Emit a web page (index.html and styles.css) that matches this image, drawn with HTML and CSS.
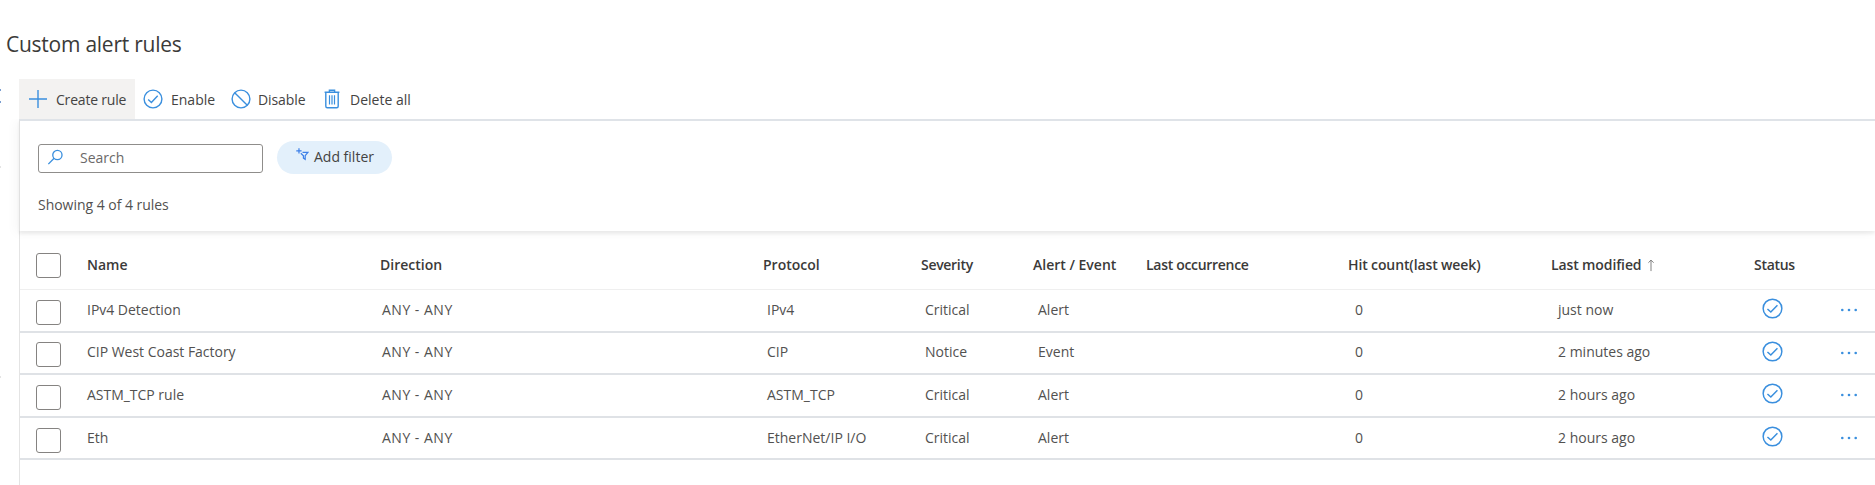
FILE: index.html
```html
<!DOCTYPE html>
<html lang="en">
<head>
<meta charset="utf-8">
<title>Custom alert rules</title>
<link rel="stylesheet" href="styles.css">
</head>
<body>
<svg width="0" height="0" class="defs">
  <symbol id="check" viewBox="0 0 20 20"><circle cx="10" cy="10" r="8.9"/><path d="M5.2 10.4 8.4 13.4 14.7 6.8"/></symbol>
  <symbol id="dots" viewBox="0 0 18 4"><circle cx="2.3" cy="2" r="1.3"/><circle cx="9" cy="2" r="1.3"/><circle cx="15.7" cy="2" r="1.3"/></symbol>
</svg>
<div class="page">
  <h1 class="title">Custom alert rules</h1>
  <div class="body">
    <aside class="edge"><i class="blue"></i><i class="blue second"></i><i class="grey"></i><i class="grey low"></i></aside>
    <main class="main">
      <nav class="toolbar">
        <a class="tool create"><svg class="ico" viewBox="0 0 20 20"><path d="M10 1V19M1 10H19"/></svg><span>Create rule</span></a>
        <a class="tool enable"><svg class="ico"><use href="#check"/></svg><span>Enable</span></a>
        <a class="tool disable"><svg class="ico" viewBox="0 0 20 20"><circle cx="10" cy="10" r="8.9"/><path d="M3.7 3.7 16.3 16.3"/></svg><span>Disable</span></a>
        <a class="tool delete"><svg class="ico" viewBox="0 0 20 20"><path d="M3.8 3.2V17.2Q3.8 18.7 5.3 18.7H14.7Q16.2 18.7 16.2 17.2V3.2M2.6 3.2H17.4M7.4 3V1.2H12.6V3"/><path class="thin" d="M7.5 6.2V15.6M10 6.2V15.6M12.5 6.2V15.6"/></svg><span>Delete all</span></a>
      </nav>
      <section class="filters">
        <div class="controls">
          <div class="search"><svg class="ico glass" viewBox="0 0 18 18"><circle cx="11" cy="6.3" r="4.9"/><path d="M7.5 9.8 1.4 16"/></svg><span>Search</span></div>
          <div class="pill"><svg class="ico funnel" viewBox="0 0 14 14"><path d="M3.2 .3V6M.3 3.1H6"/><path d="M7 4.7H12.8L9.9 8.3V12.2L8 10.9V8.3L5.2 5.7"/></svg><span>Add filter</span></div>
        </div>
        <p class="count">Showing 4 of 4 rules</p>
      </section>
      <section class="table">
        <div class="row head"><i class="box"></i><span class="name">Name</span><span>Direction</span><span>Protocol</span><span class="tight">Severity</span><span>Alert / Event</span><span class="tight">Last occurrence</span><span class="hits">Hit count(last week)</span><span class="modified">Last modified<svg class="arrow" viewBox="0 0 8 14"><path d="M4 13V1.2M1.2 4 4 1.2 6.8 4"/></svg></span><span class="tight">Status</span></div>
        <div class="row"><i class="box"></i><span class="name">IPv4 Detection</span><span class="dir">ANY - ANY</span><span class="c4">IPv4</span><span class="c4">Critical</span><span class="c5">Alert</span><span></span><span class="c6">0</span><span class="c7">just now</span><svg class="ico status"><use href="#check"/></svg><svg class="dots"><use href="#dots"/></svg></div>
        <div class="row"><i class="box"></i><span class="name">CIP West Coast Factory</span><span class="dir">ANY - ANY</span><span class="c4">CIP</span><span class="c4">Notice</span><span class="c5">Event</span><span></span><span class="c6">0</span><span class="c7">2 minutes ago</span><svg class="ico status"><use href="#check"/></svg><svg class="dots"><use href="#dots"/></svg></div>
        <div class="row"><i class="box"></i><span class="name">ASTM_TCP rule</span><span class="dir">ANY - ANY</span><span class="c4">ASTM_TCP</span><span class="c4">Critical</span><span class="c5">Alert</span><span></span><span class="c6">0</span><span class="c7">2 hours ago</span><svg class="ico status"><use href="#check"/></svg><svg class="dots"><use href="#dots"/></svg></div>
        <div class="row"><i class="box"></i><span class="name">Eth</span><span class="dir">ANY - ANY</span><span class="c4">EtherNet/IP I/O</span><span class="c4">Critical</span><span class="c5">Alert</span><span></span><span class="c6">0</span><span class="c7">2 hours ago</span><svg class="ico status"><use href="#check"/></svg><svg class="dots"><use href="#dots"/></svg></div>
      </section>
    </main>
  </div>
</div>
</body>
</html>
```
FILE: styles.css
```css
* { box-sizing: border-box; }
body { margin: 0; background: #fff; color: #525150; font: 14px/20px "Open Sans", "Noto Sans", sans-serif; }
.defs { display: block; }
.page { width: 1875px; height: 485px; overflow: hidden; }
.title { margin: 0; padding: 29px 0 0 6px; height: 79px; font-size: 21px; line-height: 30px; font-weight: 400; color: #3b3a39; letter-spacing: -0.25px; white-space: nowrap; }
.body { display: flex; height: 406px; }
.edge { position: relative; width: 19px; flex: none; }
.edge i { position: absolute; left: 0; width: 1px; height: 2px; }
.edge .blue { top: 10px; background: #7a9ed0; }
.edge .second { top: 22px; }
.edge .grey { top: 87px; background: #e4e4e4; }
.edge .low { top: 297px; }
.main { flex: 1; }
.ico { width: 20px; height: 20px; flex: none; fill: none; stroke: #3a8fde; stroke-width: 1.4; }
.thin { stroke-width: 1.2; }
.toolbar { display: flex; height: 40px; color: #444342; }
.tool { display: flex; align-items: center; white-space: nowrap; padding-top: 1px; }
.tool .ico { margin-top: -1px; }
.create { width: 116px; padding-left: 9px; gap: 8px; background: #f3f2f1; letter-spacing: -0.2px; }
.enable { width: 88px; padding-left: 8px; gap: 8px; }
.disable { width: 91px; padding-left: 8px; gap: 7px; letter-spacing: -0.1px; }
.delete { padding-left: 8px; gap: 8px; }
.filters { height: 112px; border-top: 2px solid #dfe3e8; border-left: 1px solid #e1e1e1; padding: 20px 0 0 18px; box-shadow: 0 3px 3px rgba(0,0,0,.06), -3px 2px 11px rgba(0,0,0,.04); clip-path: inset(0 0 -8px -19px); }
.controls { display: flex; align-items: center; height: 33px; gap: 14px; }
.search { width: 225px; height: 29px; margin-top: 1px; border: 1.5px solid #8f8d8b; border-radius: 3px; display: flex; align-items: center; padding-left: 8px; color: #6b6968; }
.glass { width: 17px; height: 17px; margin-right: 16px; margin-top: -1px; }
.pill { width: 115px; height: 33px; border-radius: 17px; background: #e3f0fb; display: flex; align-items: center; padding: 0 0 2px 19px; white-space: nowrap; color: #444342; }
.funnel { width: 13px; height: 13px; margin: -4px 5px 0 0; stroke: #3c7fe8; stroke-width: 1.3; }
.count { margin: 21px 0 0; line-height: 20px; letter-spacing: -0.03px; }
.table { border-left: 1px solid #e4e4e4; height: 254px; }
.row { display: grid; grid-template-columns: 67px 293px 383px 158px 112px 113px 202px 203px 203px 71px 1fr; height: 42.6px; align-items: center; border-bottom: 2px solid #dfe2e6; white-space: nowrap; }
.row > span { margin-top: -1px; }
.head { height: 59px; font-weight: 600; color: #3b3a39; border-bottom: 1px solid #efefef; padding-top: 9px; }
.head > span { margin-top: 1px; }
.row > .tight { letter-spacing: -0.3px; }
.hits, .modified { letter-spacing: -0.12px; }
.box { width: 25px; height: 25px; margin-left: 16px; border: 1.5px solid #858381; border-radius: 3px; margin-top: 4px; }
.head .box { margin-top: 2px; }
.name { letter-spacing: -0.02px; }
.dir { padding-left: 2px; letter-spacing: 0.5px; }
.c4 { padding-left: 4px; }
.c5 { padding-left: 5px; }
.c6, .c7 { padding-left: 7px; }
.modified { display: flex; align-items: center; }
.arrow { width: 8px; height: 13px; margin-left: 6px; fill: none; stroke: #777; stroke-width: 1; }
.status { margin: -3px 0 0 8px; width: 21px; height: 21px; }
.dots { width: 18px; height: 4px; margin-left: 15px; fill: #3a8fde; margin-top: 0; }
```
